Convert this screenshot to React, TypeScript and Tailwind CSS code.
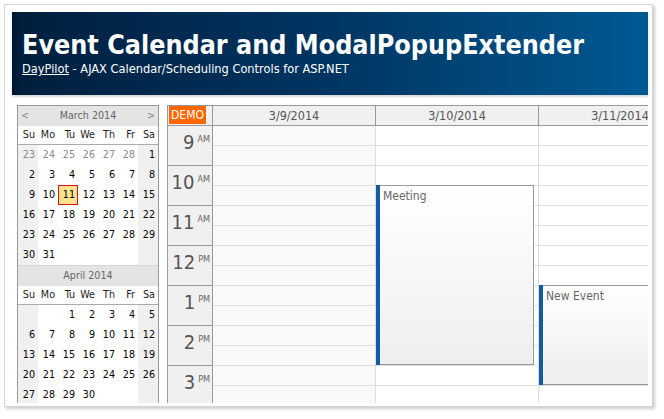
import React from "react";

type Cell = { d: number; other?: boolean; today?: boolean } | null;

const names = ["Su", "Mo", "Tu", "We", "Th", "Fr", "Sa"];

const march: Cell[][] = [
  [{ d: 23, other: true }, { d: 24, other: true }, { d: 25, other: true }, { d: 26, other: true }, { d: 27, other: true }, { d: 28, other: true }, { d: 1 }],
  [2, 3, 4, 5, 6, 7, 8].map((d) => ({ d })),
  [{ d: 9 }, { d: 10 }, { d: 11, today: true }, { d: 12 }, { d: 13 }, { d: 14 }, { d: 15 }],
  [16, 17, 18, 19, 20, 21, 22].map((d) => ({ d })),
  [23, 24, 25, 26, 27, 28, 29].map((d) => ({ d })),
  [{ d: 30 }, { d: 31 }, null, null, null, null, null],
];

const april: Cell[][] = [
  [null, null, { d: 1 }, { d: 2 }, { d: 3 }, { d: 4 }, { d: 5 }],
  [6, 7, 8, 9, 10, 11, 12].map((d) => ({ d })),
  [13, 14, 15, 16, 17, 18, 19].map((d) => ({ d })),
  [20, 21, 22, 23, 24, 25, 26].map((d) => ({ d })),
  [{ d: 27 }, { d: 28 }, { d: 29 }, { d: 30 }, null, null, null],
];

function Month({ title, rows, first }: { title: string; rows: Cell[][]; first?: boolean }) {
  return (
    <div>
      <div
        className={`flex items-center bg-[#e4e4e4] text-[#666] ${first ? "h-[20px]" : "h-[21px] border-t border-[#d6d6d6]"}`}
      >
        <span className="w-[20px] pl-[3px] text-[#888]">{first ? "<" : ""}</span>
        <span className="flex-1 text-center">{title}</span>
        <span className="w-[20px] pr-[3px] text-right text-[#888]">{first ? ">" : ""}</span>
      </div>
      <div className="grid grid-cols-7 h-[19px] border-b border-[#aaaaaa] bg-white text-[#222]">
        {names.map((n) => (
          <div key={n} className="text-right pr-[3px] leading-[18px]">
            {n}
          </div>
        ))}
      </div>
      {rows.map((row, ri) => (
        <div key={ri} className="grid grid-cols-7 h-[20px]">
          {row.map((c, ci) => {
            const weekend = ci === 0 || ci === 6;
            const bg = weekend ? "bg-[#f0f0f0]" : "bg-white";
            if (!c) return <div key={ci} className={bg} />;
            if (c.today)
              return (
                <div
                  key={ci}
                  className="border border-[#e01010] bg-[#ffe38f] text-right pr-[2px] leading-[18px] text-black"
                >
                  {c.d}
                </div>
              );
            return (
              <div
                key={ci}
                className={`${bg} text-right pr-[3px] leading-[20px] ${c.other ? "text-[#8a8a8a]" : "text-black"}`}
              >
                {c.d}
              </div>
            );
          })}
        </div>
      ))}
    </div>
  );
}

function Navigator() {
  return (
    <div className="w-[142px] shrink-0 h-full border-x border-t border-[#999999] overflow-hidden text-[10.67px]">
      <Month title="March 2014" rows={march} first />
      <Month title="April 2014" rows={april} />
    </div>
  );
}

const hours = [
  ["9", "AM"],
  ["10", "AM"],
  ["11", "AM"],
  ["12", "PM"],
  ["1", "PM"],
  ["2", "PM"],
  ["3", "PM"],
];

function Event({ top, height, text }: { top: number; height: number; text: string }) {
  return (
    <div className="absolute left-0 w-[158px] flex" style={{ top, height }}>
      <div className="w-[4px] h-full bg-[#0f5ea3]" />
      <div className="flex-1 h-full border-y border-r border-[#999999] bg-gradient-to-b from-white to-[#eeeeee] pl-[3px] pt-[3px] text-[12px] leading-[14px] text-[#666]">
        {text}
      </div>
    </div>
  );
}

function DayColumn({ bg, events }: { bg: string; events?: { top: number; height: number; text: string }[] }) {
  return (
    <div className={`relative w-[163px] shrink-0 border-r border-[#dddddd] ${bg}`}>
      {Array.from({ length: 14 }).map((_, i) => (
        <div key={i} className="h-[20px] border-b border-[#dedede]" />
      ))}
      {events?.map((e, i) => (
        <Event key={i} {...e} />
      ))}
    </div>
  );
}

function Calendar() {
  const days = ["3/9/2014", "3/10/2014", "3/11/2014"];
  return (
    <div className="w-[700px] border-l border-t border-[#999999]">
      <div className="flex h-[20px] border-b border-[#999999] bg-[#f0f0f0]">
        <div className="relative w-[45px] shrink-0 border-r border-[#999999]">
          <div className="absolute left-[1px] top-0 h-[18px] px-[2px] bg-[#ff6600] text-white text-[12px] leading-[18px]">
            DEMO
          </div>
        </div>
        {days.map((d) => (
          <div
            key={d}
            className="w-[163px] shrink-0 border-r border-[#999999] text-center text-[12.5px] leading-[19px] text-[#555]"
          >
            {d}
          </div>
        ))}
      </div>
      <div className="flex">
        <div className="w-[45px] shrink-0 border-r border-[#999999] bg-[#f0f0f0]">
          {hours.map(([h, ap]) => (
            <div key={h} className="h-[40px] border-b border-[#999999] flex justify-end items-start pr-[2px] pt-[6px]">
              <span className="text-[20px] leading-[20px] text-[#555]">{h}</span>
              <span className="ml-[3px] mt-[3px] text-[9px] leading-[9px] text-[#666]">{ap}</span>
            </div>
          ))}
        </div>
        <DayColumn bg="bg-[#f9f9f9]" />
        <DayColumn bg="bg-white" events={[{ top: 59, height: 180, text: "Meeting" }]} />
        <DayColumn bg="bg-white" events={[{ top: 159, height: 100, text: "New Event" }]} />
      </div>
    </div>
  );
}

export default function App() {
  return (
    <div className="w-[664px] h-[419px] bg-white overflow-hidden font-['DejaVu_Sans_Condensed','DejaVu_Sans',sans-serif] [font-stretch:condensed]">
      <div className="ml-[4px] mt-[4px] w-[649px] h-[403px] border border-[#d4d4d4] shadow-[2px_2px_3px_rgba(0,0,0,0.2)] pl-[7px] pt-[7px]">
        <header className="w-[636px] h-[83px] bg-[linear-gradient(to_right,#00152b_0px,#001f3e_8px,#003562_50%,#005993_100%)] shadow-[0_2px_2px_rgba(0,0,0,0.15)] pl-[10px] pt-[17px] text-white">
          <h1 className="text-[26.67px] font-bold leading-[32px]">Event Calendar and ModalPopupExtender</h1>
          <div className="text-[12.7px] leading-[15px]">
            <span className="underline">DayPilot</span> - AJAX Calendar/Scheduling Controls for ASP.NET
          </div>
        </header>
        <div className="mt-[10px] flex w-[636px] h-[298px] overflow-hidden pl-[5px]">
          <Navigator />
          <div className="ml-[8px] flex-1 min-w-0 overflow-hidden">
            <Calendar />
          </div>
        </div>
      </div>
    </div>
  );
}
